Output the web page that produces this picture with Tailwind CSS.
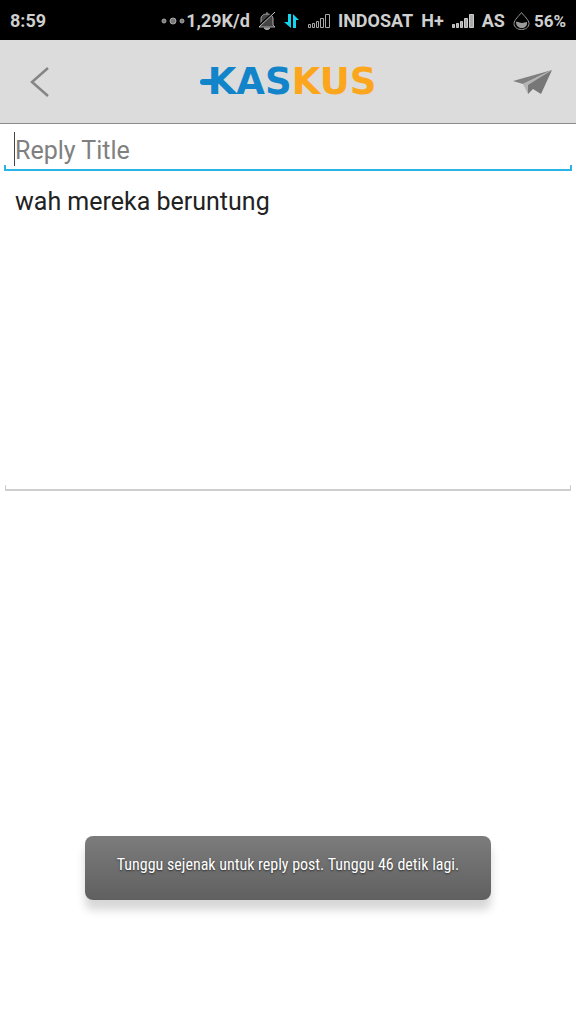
<!DOCTYPE html>
<html lang="id">

  <head>
    <meta charset="UTF-8" />
    <meta name="viewport" content="width=device-width, initial-scale=1.0" />
    <title>Kaskus - Reply</title>
    <script src="https://cdn.jsdelivr.net/npm/@tailwindcss/browser@4"></script>
  </head>

  <body class="min-h-screen flex flex-col bg-white font-[Roboto,sans-serif]">
    <!-- Status bar -->
    <div class="h-10 shrink-0 flex items-center justify-between bg-black px-2.5 pt-px text-[18px] leading-6 font-bold text-[#cfcfcf] whitespace-nowrap">
      <span>8:59</span>
      <div class="flex items-center gap-2">
        <div class="flex items-center gap-px">
          <svg class="w-6 h-2" viewBox="0 0 24 8" fill="#777" stroke="#aaa">
            <circle cx="3" cy="4" r="2" />
            <circle cx="12" cy="4" r="3" />
            <circle cx="21" cy="4" r="2" />
          </svg>
          <span>1,29K/d</span>
        </div>
        <svg class="w-[18px] h-5" viewBox="0 0 18 20" fill="none" stroke="#aaa">
          <path d="M9 1v2M3 14V8c0-3 2-5 6-5s6 2 6 5v6l2 2H1z" fill="#444" />
          <path d="M6 17c1 2 5 2 6 0z" fill="#999" />
          <path d="M1 15 16 1" stroke="#000" stroke-width="2" />
          <path d="M1 16 17 1" stroke="#ccc" />
        </svg>
        <svg class="w-4 h-4" viewBox="0 0 16 16" fill="#12d5f0">
          <path d="M4 1h3v14L0 9h4zM9 1l6 6h-3v8H9z" />
        </svg>
        <svg class="w-[22px] h-4" viewBox="0 0 22 16" fill="none" stroke="#aaa">
          <path d="M.5 11.5h2v3h-2zM4.5 10.5h2v4h-2zM8.500 8.500h2v6h-2zM12.500 5.500h3v9h-3zM17.500 1.500h4v13h-4z" />
        </svg>
        <span>INDOSAT</span>
        <span>H+</span>
        <svg class="w-[22px] h-4" viewBox="0 0 22 16" fill="#aaa" stroke="#ccc">
          <path d="M.5 11.500h2v3h-2zM4.500 10.500h2v4h-2zM8.500 8.500h2v6h-2zM12.500 5.500h3v9h-3zM17.500 1.500h4v13h-4z" />
        </svg>
        <span>AS</span>
        <div class="flex items-center gap-1">
          <svg class="w-[17px] h-5" viewBox="0 0 17 20" fill="none">
            <path d="M8.500 1.500C6 5 1 9 1 12.500c0 8 15 8 15 0C16 9 11 5 8.500 1.500z" stroke="#999" />
            <path d="M3 11c2-1 4 1 6 1s3-1 5-1c1 8-11 8-11 0z" fill="#999" />
          </svg>
          <span class="text-[17px]">56%</span>
        </div>
      </div>
    </div>

    <!-- Header -->
    <header class="h-[84px] shrink-0 grid grid-cols-[80px_1fr_86px] items-center border-b border-[#8c8c8c] bg-[#dcdcdc]">
      <button type="button" aria-label="Back" class="h-full flex items-center justify-center">
        <svg class="w-5 h-8" viewBox="0 0 20 32" fill="none" stroke="#858585" stroke-width="2.500">
          <path d="M18 2 2 16l16 14" />
        </svg>
      </button>
      <h1 class="flex items-center justify-center pl-1.5 font-['DejaVu_Sans',sans-serif] text-[37px] leading-10 font-bold">
        <span class="w-3 h-1.5 -mr-1 rounded-l-sm bg-[#1184ca]"></span>
        <span class="text-[#1184ca]">KAS</span><span class="text-[#fba61c]">KUS</span>
      </h1>
      <button type="button" aria-label="Send" class="h-full flex items-center justify-center">
        <svg class="w-10 h-6" viewBox="0 0 40 24">
          <path d="M0 11 39 0 10 14z" fill="#808080" />
          <path d="M10 14 39 0 15 16v8z" fill="#b4b4b4" />
          <path d="M39 0 28 24l-8-5-5 5v-9z" fill="#777" />
        </svg>
      </button>
    </header>

    <!-- Reply form -->
    <form class="px-1 text-[25px] leading-8">
      <div class="relative h-12 flex items-center px-2.5">
        <span class="absolute left-2.5 top-2 w-px h-[34px] bg-[#444]"></span>
        <input type="text" aria-label="Reply Title" placeholder="Reply Title" class="w-full pt-1.5 pl-px outline-none placeholder:text-[#808080]" />
        <span class="absolute inset-x-0 bottom-px h-1.5 border-x-2 border-b-2 border-[#2bb5e6]"></span>
      </div>
      <div class="relative h-[319px] px-2.5 pt-3.5">
        <textarea aria-label="Reply" class="block w-full h-[290px] pl-px resize-none outline-none text-[#222]">wah mereka beruntung</textarea>
        <span class="absolute inset-x-0 bottom-0 mx-px h-1.5 border-x border-b-2 border-[#cecece]"></span>
      </div>
    </form>

    <!-- Toast -->
    <div role="status" class="mt-auto mb-[124px] mx-[85px] h-16 flex items-center justify-center rounded-lg bg-linear-to-b from-[#7c7c7c] to-[#606060] pb-1.5 shadow-[0_10px_10px_rgba(0,0,0,0.16)] font-['Roboto_Condensed','Liberation_Sans_Narrow',sans-serif] text-[16px] leading-6 text-white whitespace-nowrap text-shadow-[0_1px_2px_rgba(0,0,0,0.6)]">
      Tunggu sejenak untuk reply post. Tunggu 46 detik lagi.
    </div>
  </body>

</html>
